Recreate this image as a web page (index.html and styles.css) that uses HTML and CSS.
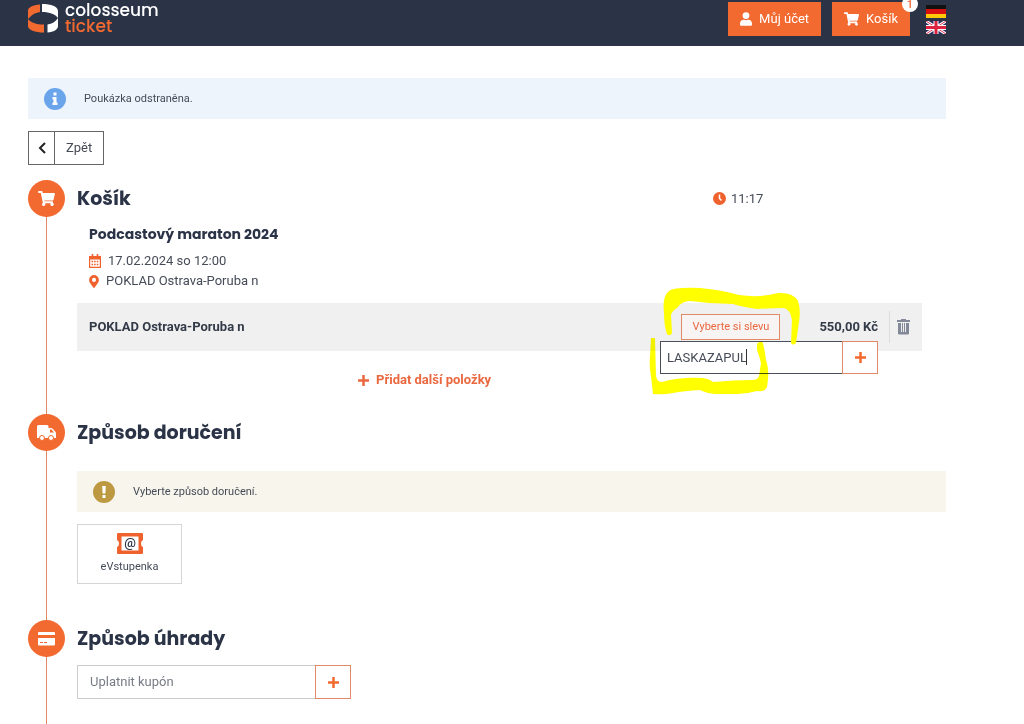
FILE: index.html
```
<!DOCTYPE html>
<html lang="cs">
  <head>
    <meta charset="UTF-8" />
    <meta name="viewport" content="width=device-width, initial-scale=1.0" />
    <title>Colosseum Ticket</title>
    <link rel="stylesheet" href="styles.css">
  </head>
  <body>
    <header class="header">
      <a href="#" class="logo">
        <svg width="30" height="29" viewBox="0 0 30 29">
          <path fill="#f26a30" d="M12 .5V8C8 8.500 4 10.500 1.500 13.500L0 15V6.500C0 3.500 5 1 12 .5zM0 15c2.500 3.500 8 5.500 16 5.500v8C7 28.500 0 26 0 22z" />
          <path fill="#fff" d="M30 14c-2.500-3.500-8-6-16-6V0c9 0 16 2.500 16 7zM19.500 28.500v-8c4.500-.5 8-3 10.500-6.500V22c0 3.500-4.500 6-10.500 6.500z" />
        </svg>
        <span class="logo-text">colosseum<span>ticket</span></span>
      </a>
      <nav class="header-nav">
        <a href="#" class="btn">
          <svg width="12" height="14" viewBox="0 0 448 512" fill="currentColor"><path d="M224 256a128 128 0 1 0 0-256 128 128 0 0 0 0 256zm90 32h-17a174 174 0 0 1-146 0h-17C60 288 0 348 0 422v42c0 27 21 48 48 48h352c27 0 48-21 48-48v-42c0-74-60-134-134-134z" /></svg>
          Můj účet
        </a>
        <a href="#" class="btn">
          <svg width="15" height="14" viewBox="0 0 576 512" fill="currentColor"><path d="M528 301l47-208c4-15-8-29-23-29H159l-9-45C148 8 138 0 126 0H24C11 0 0 11 0 24v16c0 13 11 24 24 24h70l70 343a56 56 0 1 0 67 9h210a56 56 0 1 0 64-10l5-25c4-15-8-29-23-29H218l-6-32h293c11 0 21-8 23-19z" /></svg>
          Košík
          <span class="badge">1</span>
        </a>
        <div class="languages">
          <a href="#" aria-label="Deutsch">
            <svg width="20" height="13" viewBox="0 0 20 13"><path fill="#111" d="M0 0h20v5H0z" /><path fill="#d80f0f" d="M0 4h20v5H0z" /><path fill="#ffc90a" d="M0 9h20v4H0z" /></svg>
          </a>
          <a href="#" aria-label="English">
            <svg width="20" height="13" viewBox="0 0 20 13">
              <path fill="#2b3063" d="M0 0h20v13H0z" />
              <path stroke="#fff" stroke-width="3" d="M0 0l20 13M20 0L0 13" />
              <path stroke="#dc3350" d="M0 0l20 13M20 0L0 13" />
              <path stroke="#fff" stroke-width="5" d="M10 0v13M0 6.500h20" />
              <path stroke="#dc2440" stroke-width="3" d="M10 0v13M0 6.500h20" />
            </svg>
          </a>
        </div>
      </nav>
    </header>

    <main class="main">
      <div class="alert alert-info">
        <svg width="22" height="22" viewBox="0 0 22 22"><circle cx="11" cy="11" r="11" fill="#6aa5ec" /><path fill="#fff" d="M9.500 4.500h3v3h-3zM8.500 9h4v5.500h1V17h-5v-2.500h1v-3h-1z" /></svg>
        <p>Poukázka odstraněna.</p>
      </div>

      <a href="#" class="back">
        <span class="back-icon">
          <svg width="8" height="12" viewBox="0 0 8 12" fill="none" stroke="currentColor" stroke-width="2"><path d="M7 1L2 6l5 5" /></svg>
        </span>
        <span class="back-text">Zpět</span>
      </a>

      <div class="steps">
        <!-- Cart -->
        <section class="step">
          <div class="step-rail">
            <div class="step-icon">
              <svg width="17" height="15" viewBox="0 0 576 512" fill="currentColor"><path d="M528 301l47-208c4-15-8-29-23-29H159l-9-45C148 8 138 0 126 0H24C11 0 0 11 0 24v16c0 13 11 24 24 24h70l70 343a56 56 0 1 0 67 9h210a56 56 0 1 0 64-10l5-25c4-15-8-29-23-29H218l-6-32h293c11 0 21-8 23-19z" /></svg>
            </div>
          </div>
          <div class="step-content">
            <div class="step-head">
              <h2>Košík</h2>
              <div class="timer">
                <svg width="13" height="13" viewBox="0 0 13 13"><circle cx="6.500" cy="6.500" r="6.500" fill="#f0622d" /><path fill="none" stroke="#fff" stroke-width="1.500" d="M6.500 2.500v4l2 2" /></svg>
                11:17
              </div>
            </div>
            <div class="event">
              <h3>Podcastový maraton 2024</h3>
              <p>
                <svg width="12" height="14" viewBox="0 0 12 14" fill="none" stroke="#f0622d"><path stroke-width="1.200" d="M.6 2.600h10.800v10.800H.6z" /><path fill="#f0622d" d="M1 3h10v2H1z" /><path stroke-width="1.600" d="M3.500 0v3M8.500 0v3" /><path stroke-width="1.500" stroke-dasharray="1.600 1" d="M2.500 7.500h7.500M2.500 10.500h7.500" /></svg>
                17.02.2024 so 12:00
              </p>
              <p>
                <svg width="10" height="13" viewBox="0 0 384 512" fill="#f0622d"><path d="M172 502C27 291 0 270 0 192a192 192 0 0 1 384 0c0 78-27 99-172 310-10 13-30 13-40 0zm20-230a80 80 0 1 0 0-160 80 80 0 0 0 0 160z" /></svg>
                POKLAD Ostrava-Poruba n
              </p>
            </div>
            <div class="item">
              <strong class="item-name">POKLAD Ostrava-Poruba n</strong>
              <div class="item-price">
                <button type="button" class="btn-discount">Vyberte si slevu</button>
                <strong>550,00 Kč</strong>
                <form class="discount-form input-group">
                  <input type="text" value="LASKAZAPUL" aria-label="Slevový kód">
                  <button type="button" aria-label="Přidat slevu">
                    <svg width="11" height="11" viewBox="0 0 11 11" stroke="currentColor" stroke-width="2.500"><path d="M5.500 0v11M0 5.500h11" /></svg>
                  </button>
                </form>
                <span class="caret"></span>
                <svg class="marker" width="154" height="110" viewBox="648 286 154 110" fill="#ff0">
                  <path d="M664 312Q662 297 669 291Q674 287 700 288Q722 290 739 295Q760 298 778 293Q793 292 798 301Q801 310 799 322L796 343Q793 346 791 343L792 320Q790 309 784 308Q773 308 757 309Q743 307 733 304Q711 304 690 301Q682 301 677 308Q672 311 671 315L672 333Q670 337 667 334Q664 326 664 312z" />
                </svg>
                <svg class="marker marker-blend" width="154" height="110" viewBox="648 286 154 110" fill="#ff0">
                  <path d="M651 338H655L656 376Q657 382 662 382Q680 377 703 378Q710 379 713 382Q735 380 752 380Q758 380 759 376L761 363Q759 355 757 350V344Q760 340 763 343Q765 351 766 360Q770 370 767 387Q765 392 757 391Q747 394 737 394H717Q708 394 700 390Q684 391 673 393Q663 395 653 394Q652 384 651 377Q649 365 650 357z" />
                </svg>
              </div>
              <button type="button" class="item-remove" aria-label="Odstranit">
                <svg width="13" height="16" viewBox="0 0 13 16"><path fill="none" stroke="#84899a" d="M1.500 4v11h10V4" /><path fill="#84899a" d="M4 0h5v1h4v2H0V1h4zM2 4h2v11H2zM5 4h1v9H5zM7 4h1v9H7zM9 4h2v11H9zM2 13h9v2H2z" /></svg>
              </button>
            </div>
            <div class="add-more">
              <a href="#">
                <svg width="11" height="11" viewBox="0 0 11 11" stroke="currentColor" stroke-width="2.500"><path d="M5.500 0v11M0 5.500h11" /></svg>
                Přidat další položky
              </a>
            </div>
          </div>
        </section>

        <!-- Delivery -->
        <section class="step">
          <div class="step-rail">
            <div class="step-icon">
              <svg width="19" height="16" viewBox="0 0 19 16"><path fill="currentColor" d="M1.500 0H10q1.500 0 1.500 1.500V3H14q1 0 1.700.8l2.500 2.700q.8.800.8 2V13H0V1.500Q0 0 1.500 0z" /><path fill="#f26a30" d="M13 4.500h1.500L17 7.500h-4z" /><g fill="currentColor" stroke="#f26a30"><circle cx="5" cy="13" r="2.500" /><circle cx="14" cy="13" r="2.500" /></g></svg>
            </div>
          </div>
          <div class="step-content">
            <div class="step-head">
              <h2>Způsob doručení</h2>
            </div>
            <div class="alert alert-warning">
              <svg width="22" height="22" viewBox="0 0 22 22"><circle cx="11" cy="11" r="11" fill="#bd9a42" /><path fill="#fff" d="M9.200 5h3.600l-.4 7.500H9.600zM9.500 14h3v3h-3z" /></svg>
              <p>Vyberte způsob doručení.</p>
            </div>
            <button type="button" class="delivery">
              <svg width="26" height="21" viewBox="0 0 26 21">
                <path fill="#f0622d" d="M1 0h24q1 0 1 1v6q-2 .5-2 3.500t2 3.500v6q0 1-1 1H1q-1 0-1-1v-6q2-.5 2-3.500T0 7V1q0-1 1-1z" />
                <path fill="#fff" d="M4.500 3.500h17v14h-17z" />
                <text x="13" y="14" text-anchor="middle" class="delivery-at">@</text>
              </svg>
              eVstupenka
            </button>
          </div>
        </section>

        <!-- Payment -->
        <section class="step">
          <div class="step-rail">
            <div class="step-icon">
              <svg width="17" height="14" viewBox="0 0 17 14"><path fill="currentColor" d="M1 0h15q1 0 1 1v2H0V1q0-1 1-1zM0 6h17v6.500q0 1-1 1H1q-1 0-1-1z" /><path stroke="#f26a30" stroke-dasharray="3 1" d="M2 10.500h8" /></svg>
            </div>
          </div>
          <div class="step-content">
            <div class="step-head">
              <h2>Způsob úhrady</h2>
            </div>
            <form class="coupon-form input-group">
              <input type="text" placeholder="Uplatnit kupón" aria-label="Uplatnit kupón">
              <button type="button" aria-label="Přidat kupón">
                <svg width="11" height="11" viewBox="0 0 11 11" stroke="currentColor" stroke-width="2.500"><path d="M5.500 0v11M0 5.500h11" /></svg>
              </button>
            </form>
          </div>
        </section>
      </div>
    </main>
  </body>
</html>
```

FILE: styles.css
```
:root {
  --primary: #f26a30;
  --primary-border: #e08a68;
  --dark: #2b3347;
  --text: #454b57;
}

* {
  margin: 0;
  padding: 0;
  box-sizing: border-box;
}

body {
  display: flex;
  flex-direction: column;
  min-height: 100vh;
  background: white;
  color: var(--text);
  font-family: Roboto, sans-serif;
  font-size: 13px;
  line-height: 20px;
}

a {
  color: inherit;
  text-decoration: none;
}

button,
input {
  font: inherit;
  color: inherit;
  background: white;
  border-radius: 0;
}

button {
  cursor: pointer;
}

svg {
  flex-shrink: 0;
}

/* Header */
.header {
  display: flex;
  justify-content: space-between;
  align-items: flex-start;
  height: 46px;
  padding: 2px 78px 0 28px;
  background: var(--dark);
}

.logo {
  display: flex;
  align-items: flex-start;
  gap: 7px;
}

.logo svg {
  margin-top: 2px;
}

.logo-text {
  color: white;
  font-family: Poppins, Inter, sans-serif;
  font-size: 17px;
  font-weight: 500;
  line-height: 16px;
}

.logo-text span {
  display: block;
  color: var(--primary);
}

.header-nav {
  display: flex;
  gap: 11px;
}

.btn {
  position: relative;
  display: flex;
  align-items: center;
  gap: 7px;
  height: 34px;
  padding: 0 12px;
  background: var(--primary);
  color: white;
}

.badge {
  position: absolute;
  top: -6px;
  right: -8px;
  width: 16px;
  height: 16px;
  border-radius: 50%;
  background: white;
  color: var(--primary);
  font-size: 11px;
  font-weight: 500;
  line-height: 18px;
  text-align: center;
}

.languages {
  display: flex;
  flex-direction: column;
  gap: 3px;
  padding: 3px 0 0 5px;
}

.languages a,
.languages svg {
  display: block;
}

/* Main */
.main {
  flex: 1;
  display: flex;
  flex-direction: column;
  align-items: flex-start;
  padding: 32px 78px 0 28px;
}

.alert {
  display: flex;
  align-items: center;
  gap: 18px;
  width: 100%;
  height: 41px;
  padding: 0 16px;
  font-size: 11px;
}

.alert-info {
  background: #edf4fc;
}

.alert-warning {
  margin-top: 20px;
  background: #f8f5ec;
}

.back {
  display: flex;
  height: 34px;
  margin: 12px 0 15px;
  border: 1px solid #666;
}

.back-icon,
.back-text {
  display: flex;
  align-items: center;
  justify-content: center;
}

.back-icon {
  width: 26px;
  border-right: 1px solid #666;
  color: #222;
}

.back-text {
  padding: 0 11px;
}

/* Steps */
.steps {
  flex: 1;
  display: flex;
  flex-direction: column;
  width: 100%;
}

.step {
  display: flex;
  gap: 12px;
}

.step:last-child {
  flex: 1;
}

.step-rail {
  display: flex;
  flex-direction: column;
  align-items: center;
}

.step-rail::after {
  content: "";
  flex: 1;
  width: 1px;
  background: var(--primary-border);
}

.step-icon {
  display: flex;
  align-items: center;
  justify-content: center;
  width: 37px;
  height: 37px;
  border-radius: 50%;
  background: var(--primary);
  color: white;
}

.step-content {
  flex: 1;
  min-width: 0;
}

.step-head {
  display: grid;
  grid-template-columns: 1fr 233px;
  align-items: center;
  height: 37px;
}

h2,
h3 {
  color: var(--dark);
  font-family: Poppins, Inter, sans-serif;
  font-weight: 700;
}

h2 {
  font-size: 19px;
  line-height: 28px;
}

h3 {
  margin-bottom: 7px;
  font-size: 14px;
  line-height: 20px;
}

.timer {
  display: flex;
  align-items: center;
  gap: 5px;
}

.event {
  padding: 7px 12px 12px;
}

.event p {
  display: flex;
  align-items: center;
  gap: 7px;
}

/* Cart item */
.item {
  display: flex;
  align-items: center;
  height: 48px;
  margin-right: 24px;
  padding: 0 12px;
  background: #f0f0f0;
}

.item strong {
  color: #333a48;
  font-weight: 700;
}

.item-price {
  position: relative;
  display: flex;
  align-items: center;
  gap: 39px;
  height: 100%;
  margin-left: auto;
}

.btn-discount {
  height: 26px;
  padding: 0 10px;
  border: 1px solid var(--primary-border);
  background: #f7f4f3;
  color: #ea6840;
  font-size: 11px;
}

.item-remove {
  display: flex;
  align-items: center;
  height: 32px;
  margin-left: 11px;
  padding-left: 7px;
  border: 0;
  border-left: 1px solid #ddd;
  background: none;
}

.input-group {
  display: flex;
}

.input-group input {
  flex: 1;
  min-width: 0;
  border: 1px solid #ccc;
  border-right: 0;
  outline: 0;
}

.input-group input::placeholder {
  color: #777c85;
}

.input-group button {
  display: flex;
  align-items: center;
  justify-content: center;
  width: 36px;
  border: 1px solid var(--primary-border);
  color: var(--primary);
}

.discount-form {
  position: absolute;
  top: 38px;
  right: 0;
  width: 218px;
  height: 33px;
}

.discount-form input {
  padding: 0 6px;
  border-color: #4b4f5c;
}

.caret {
  position: absolute;
  top: 46px;
  right: 131px;
  width: 1px;
  height: 16px;
  background: #333;
}

/* Highlighter strokes round the discount code */
.marker {
  position: absolute;
  top: -17px;
  right: 76px;
  pointer-events: none;
}

.marker-blend {
  mix-blend-mode: multiply;
}

.add-more {
  display: flex;
  justify-content: center;
  width: 80%;
  padding: 19px 0 24px;
  color: #ea6840;
  font-weight: 700;
}

.add-more a {
  display: flex;
  align-items: center;
  gap: 7px;
}

/* Delivery */
.delivery {
  display: flex;
  flex-direction: column;
  align-items: center;
  gap: 3px;
  width: 105px;
  height: 60px;
  margin: 12px 0 36px;
  padding-top: 8px;
  border: 1px solid #d5d5d5;
  font-size: 11px;
}

.delivery-at {
  fill: var(--dark);
  font-size: 13px;
  font-weight: 500;
}

/* Payment */
.coupon-form {
  width: 274px;
  height: 34px;
  margin-top: 8px;
}

.coupon-form input {
  padding: 0 12px;
}
```
